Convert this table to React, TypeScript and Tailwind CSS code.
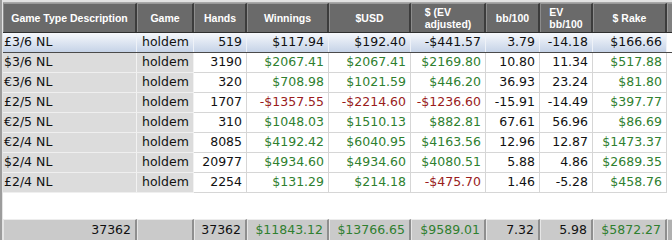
import React from "react";

type Cell = { t: string; c?: "g" | "r" | "k" };
type Row = { desc: string; game: string; vals: Cell[] };

const G = "g" as const;
const R = "r" as const;
const K = "k" as const;

const rows: Row[] = [
  { desc: "£3/6 NL", game: "holdem", vals: [{ t: "519" }, { t: "$117.94" }, { t: "$192.40" }, { t: "-$441.57" }, { t: "3.79" }, { t: "-14.18" }, { t: "$166.66" }] },
  { desc: "$3/6 NL", game: "holdem", vals: [{ t: "3190" }, { t: "$2067.41", c: G }, { t: "$2067.41", c: G }, { t: "$2169.80", c: G }, { t: "10.80" }, { t: "11.34" }, { t: "$517.88", c: G }] },
  { desc: "€3/6 NL", game: "holdem", vals: [{ t: "320" }, { t: "$708.98", c: G }, { t: "$1021.59", c: G }, { t: "$446.20", c: G }, { t: "36.93" }, { t: "23.24" }, { t: "$81.80", c: G }] },
  { desc: "£2/5 NL", game: "holdem", vals: [{ t: "1707" }, { t: "-$1357.55", c: R }, { t: "-$2214.60", c: R }, { t: "-$1236.60", c: R }, { t: "-15.91" }, { t: "-14.49" }, { t: "$397.77", c: G }] },
  { desc: "€2/5 NL", game: "holdem", vals: [{ t: "310" }, { t: "$1048.03", c: G }, { t: "$1510.13", c: G }, { t: "$882.81", c: G }, { t: "67.61" }, { t: "56.96" }, { t: "$86.69", c: G }] },
  { desc: "€2/4 NL", game: "holdem", vals: [{ t: "8085" }, { t: "$4192.42", c: G }, { t: "$6040.95", c: G }, { t: "$4163.56", c: G }, { t: "12.96" }, { t: "12.87" }, { t: "$1473.37", c: G }] },
  { desc: "$2/4 NL", game: "holdem", vals: [{ t: "20977" }, { t: "$4934.60", c: G }, { t: "$4934.60", c: G }, { t: "$4080.51", c: G }, { t: "5.88" }, { t: "4.86" }, { t: "$2689.35", c: G }] },
  { desc: "£2/4 NL", game: "holdem", vals: [{ t: "2254" }, { t: "$131.29", c: G }, { t: "$214.18", c: G }, { t: "-$475.70", c: R }, { t: "1.46" }, { t: "-5.28" }, { t: "$458.76", c: G }] },
];

const footer: Cell[] = [
  { t: "37362" },
  { t: "" },
  { t: "37362" },
  { t: "$11843.12", c: G },
  { t: "$13766.65", c: G },
  { t: "$9589.01", c: G },
  { t: "7.32" },
  { t: "5.98" },
  { t: "$5872.27", c: G },
];

const cols =
  "grid grid-cols-[134px_57px_53px_82px_82px_75px_54px_53px_74px_1fr]";

const colorCls = (c?: "g" | "r" | "k") =>
  c === "g" ? "text-[#2f7f2f]" : c === "r" ? "text-[#9a1c1c]" : "text-[#111]";

const headers: string[][] = [
  ["Game Type Description"],
  ["Game"],
  ["Hands"],
  ["Winnings"],
  ["$USD"],
  ["$ (EV", "adjusted)"],
  ["bb/100"],
  ["EV", "bb/100"],
  ["$ Rake"],
];

export default function App() {
  void K;
  return (
    <div
      className="w-[672px] h-[240px] overflow-hidden flex bg-white"
      style={{ fontFamily: "'DejaVu Sans', Verdana, sans-serif" }}
    >
      {/* left frame */}
      <div className="w-[3px] shrink-0 flex">
        <div className="w-[2px] bg-[#9c9c9c]" />
        <div className="w-[1px] bg-[#e4e4e4]" />
      </div>
      <div className="flex-1 flex flex-col min-w-0">
        <div className="h-[3px] bg-[#e2e2e2] border-b border-[#a8a8a8]" />
        {/* header */}
        <div className={`${cols} h-[30px] bg-[#6a6a6a] border-b border-[#2e2e2e]`}>
          {headers.map((h, i) => (
            <div
              key={i}
              className="flex items-center justify-center border-t border-l border-t-[#9a9a9a] border-l-[#8c8c8c] border-r-2 border-r-[#3c3c3c] text-white font-bold text-[10.5px] leading-[12px]"
              style={{ fontFamily: "'Liberation Sans', Arial, sans-serif" }}
            >
              <div className="text-left">
                {h.map((l, j) => (
                  <div key={j}>{l}</div>
                ))}
              </div>
            </div>
          ))}
          <div className="bg-[#808080] border-t border-l border-[#9a9a9a]" />
        </div>
        {/* rows */}
        {rows.map((r, ri) => {
          const sel = ri === 0;
          return (
            <div
              key={ri}
              className={`${cols} h-[20px] text-[12.5px] ${
                sel
                  ? "bg-gradient-to-b from-[#f6f8fc] to-[#c6d3e7] border-b border-[#4a4a4a]"
                  : ""
              }`}
            >
              <div
                className={`flex items-center pl-[1px] border-r ${
                  sel ? "border-[#eef2f8]" : "bg-[#dcdcdc] border-r-[#f2f2f2] border-b border-b-[#efefef]"
                } text-[#111]`}
              >
                {r.desc}
              </div>
              <div
                className={`flex items-center pl-[5px] border-r ${
                  sel ? "border-[#eef2f8]" : "bg-[#dcdcdc] border-r-[#f2f2f2] border-b border-b-[#efefef]"
                } text-[#111]`}
              >
                {r.game}
              </div>
              {r.vals.map((v, vi) => (
                <div
                  key={vi}
                  className={`flex items-center justify-end pr-[4px] border-r ${
                    sel ? "border-[#eef2f8]" : "bg-white border-r-[#d6d6d6] border-b border-b-[#d6d6d6]"
                  } ${colorCls(v.c)}`}
                >
                  {v.t}
                </div>
              ))}
              <div className="bg-white" />
            </div>
          );
        })}
        <div className="flex-1 bg-white" />
        {/* footer */}
        <div className={`${cols} h-[21px] bg-[#c9c9c9] text-[12.5px]`}>
          {footer.map((f, i) => (
            <div
              key={i}
              className={`flex items-center justify-end pr-[4px] border-t border-l border-t-[#ededed] border-l-[#e6e6e6] border-r-2 border-r-[#8e8e8e] bg-[#cacaca] ${colorCls(
                f.c
              )}`}
            >
              {f.t}
            </div>
          ))}
          <div className="bg-[#b0b0b0] border-t border-l border-[#e6e6e6]" />
        </div>
      </div>
    </div>
  );
}
